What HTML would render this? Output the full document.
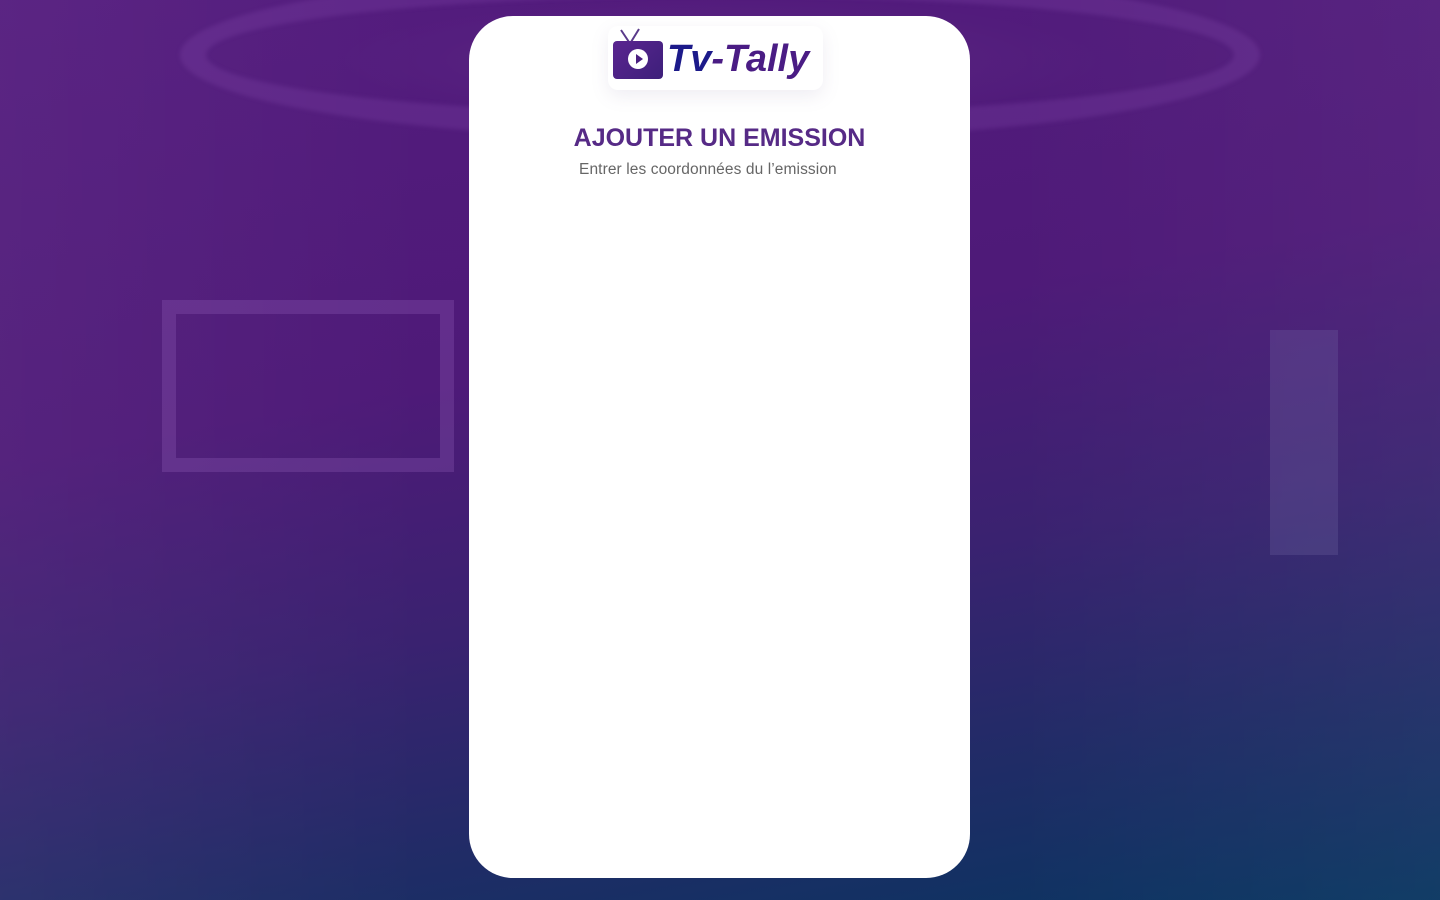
<!DOCTYPE html>
<html><head><meta charset="utf-8"><style>
html,body{margin:0;padding:0;width:1440px;height:900px;overflow:hidden}
body{position:relative;font-family:"Liberation Sans",sans-serif;
background:linear-gradient(170deg,#541c7e 0%,#4e1a78 40%,#3a2270 62%,#1f2c66 82%,#083560 100%);}
.bg{position:absolute;inset:0;background:
radial-gradient(ellipse 560px 90px at 720px 60px,rgba(255,255,255,0.05),transparent 70%),
linear-gradient(90deg,rgba(255,255,255,0.04),transparent 30%,transparent 70%,rgba(255,255,255,0.04));}
.ring{position:absolute;left:180px;top:-30px;width:1080px;height:170px;border:26px solid rgba(140,80,180,0.22);border-radius:50%;box-sizing:border-box;filter:blur(2px)}
.frame{position:absolute;left:162px;top:300px;width:292px;height:172px;border:14px solid rgba(150,100,190,0.28);box-sizing:border-box}
.panel{position:absolute;left:1270px;top:330px;width:68px;height:225px;background:rgba(120,110,170,0.25)}
.card{position:absolute;left:469px;top:16px;width:501px;height:862px;background:#fff;border-radius:44px}
.logo{position:absolute;left:608px;top:26px;width:215px;height:64px;box-shadow:0 6px 18px rgba(120,110,160,0.12);border-radius:10px}
.tv{position:absolute;left:5px;top:15px;width:50px;height:38px;background:linear-gradient(135deg,#5a2590,#3d1f7a);border-radius:4px}
.tv .c{position:absolute;left:15px;top:8px;width:20px;height:20px;border-radius:50%;background:#fff}
.tv .c:after{content:"";position:absolute;left:8px;top:5px;border-left:7px solid #4a1f80;border-top:5px solid transparent;border-bottom:5px solid transparent}
.lt{position:absolute;left:59px;top:12px;font:italic bold 38px "Liberation Sans",sans-serif;letter-spacing:0px;color:#4a1c84}
.lt span{color:#1c1a8a}
h1{position:absolute;left:469px;width:501px;top:124px;margin:0;text-align:center;font:bold 25px "Liberation Sans",sans-serif;color:#562a86}
p{position:absolute;left:579px;top:161px;margin:0;font-size:15.5px;letter-spacing:0.1px;color:#666}
</style></head><body>
<div class="bg"></div><div class="ring"></div><div class="frame"></div><div class="panel"></div>
<div class="card"></div>
<div class="logo">
<svg style="position:absolute;left:7px;top:2px" width="30" height="16"><path d="M6 2 L14 14 M24 1 L16 14" stroke="#5a3a8a" stroke-width="2"/></svg>
<div class="tv"><div class="c"></div></div>
<div class="lt"><span>Tv</span>-Tally</div>
</div>
<h1>AJOUTER UN EMISSION</h1>
<p>Entrer les coordonnées du l’emission</p>
</body></html>
